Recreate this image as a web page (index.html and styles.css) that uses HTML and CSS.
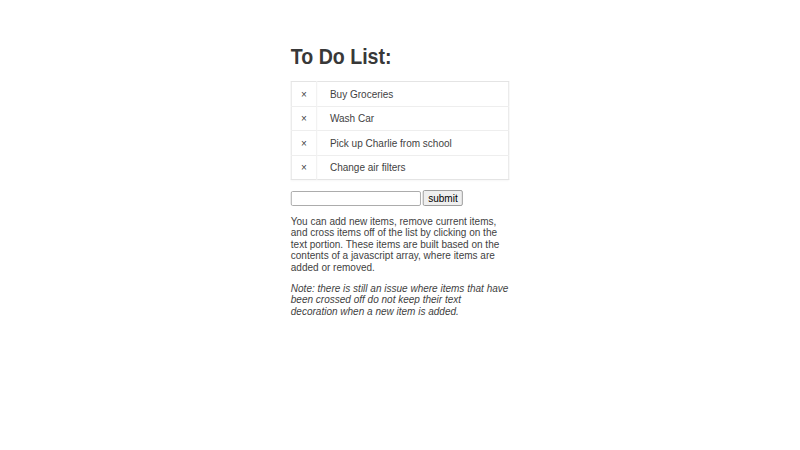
FILE: index.html
```html
<!DOCTYPE html>
<html>
<head>
<meta charset="utf-8">
<link rel="stylesheet" href="styles.css">
</head>
<body>
<main class="wrap">
  <h1 class="title">To Do List:</h1>
  <table class="list">
    <tr><td class="x">×</td><td class="item">Buy Groceries</td></tr>
    <tr><td class="x">×</td><td class="item">Wash Car</td></tr>
    <tr><td class="x">×</td><td class="item">Pick up Charlie from school</td></tr>
    <tr><td class="x">×</td><td class="item">Change air filters</td></tr>
  </table>
  <form class="add">
    <input class="field" type="text"><button class="btn" type="button">submit</button>
  </form>
  <p class="desc">You can add new items, remove current items, and cross items off of the list by clicking on the text portion. These items are built based on the contents of a javascript array, where items are added or removed.</p>
  <p class="desc note">Note: there is still an issue where items that have been crossed off do not keep their text decoration when a new item is added.</p>
</main>
</body>
</html>
```
FILE: styles.css
```css
html, body {
  margin: 0;
  padding: 0;
  background: #fff;
}
body {
  font-family: "Liberation Sans", Arial, sans-serif;
  font-size: 11px;
  color: #3f3f3f;
}
.wrap {
  width: 240px;
  margin: 0 auto;
  padding-top: 45px;
  transform: scaleX(0.91);
  transform-origin: 50% 0;
}
.title {
  margin: 0 0 12px 0;
  font-size: 21.5px;
  font-weight: bold;
  line-height: 24px;
  color: #383838;
}
.list {
  width: 100%;
  border-collapse: collapse;
  border: 1px solid #e4e4e4;
  box-shadow: 0 1px 2px rgba(0,0,0,0.04);
}
.list td {
  border-top: 1px solid #eeeeee;
  padding: 0;
  height: 23.5px;
  line-height: 12px;
  vertical-align: middle;
}
.list tr:first-child td { border-top: 0; }
.x {
  width: 27px;
  text-align: center;
  border-right: 1px solid #eeeeee;
  font-size: 11px;
}
.item {
  padding-left: 14px !important;
}
.add {
  display: flex;
  align-items: center;
  gap: 2px;
  margin: 10px 0 0 0;
}
.field {
  box-sizing: border-box;
  width: 143px;
  height: 15px;
  margin: 0;
  border: 1px solid #a8a8a8;
  border-radius: 2px;
  padding: 0 2px;
  font: 11px "Liberation Sans", Arial, sans-serif;
  background: #fff;
}
.btn {
  box-sizing: border-box;
  height: 16px;
  margin: 0;
  padding: 0 5px;
  border: 1px solid #999;
  border-radius: 2px;
  background: #efefef;
  color: #000;
  font: 11px "Liberation Sans", Arial, sans-serif;
  line-height: 13px;
}
.desc {
  margin: 10px 0 0 0;
  line-height: 11.4px;
}
.note {
  font-style: italic;
  margin-top: 9.8px;
}
```
